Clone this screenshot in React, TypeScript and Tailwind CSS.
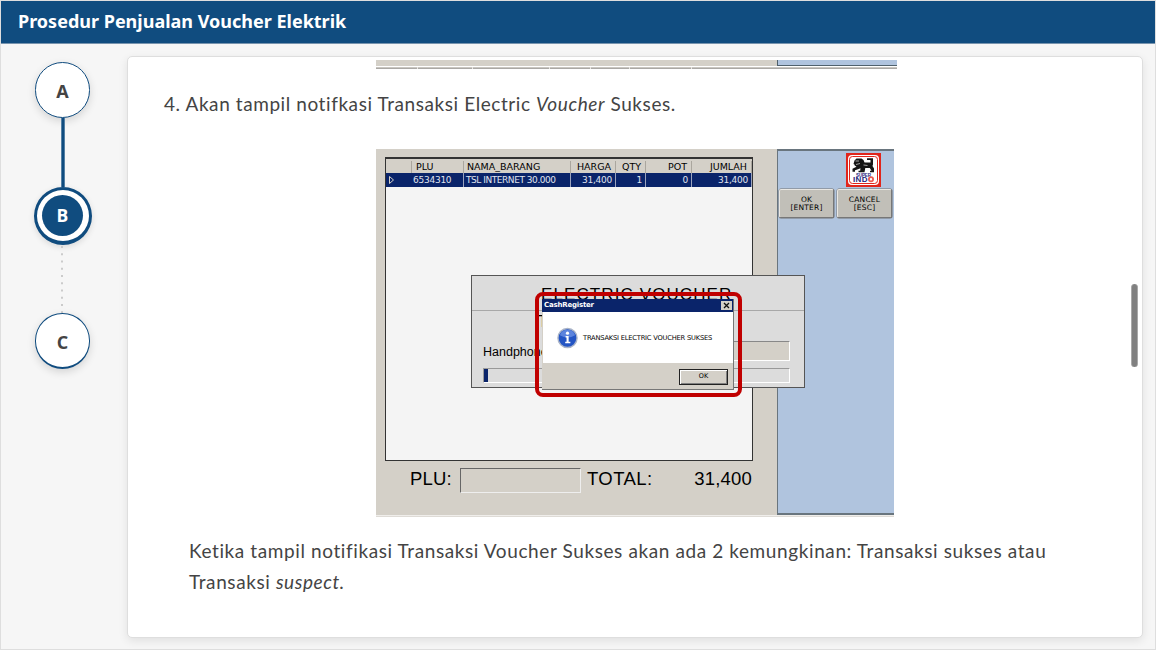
import type { ReactNode } from "react";

type StepProps = { label: string; bottomBorder?: boolean };

function Step({ label, bottomBorder }: StepProps) {
  return (
    <div
      className={`flex h-[56px] w-[55px] items-center justify-center rounded-full border bg-white border-[#104c7f] pt-[3px] text-[18px] font-bold text-[#444] shadow-[0_3px_8px_rgba(0,0,0,0.14)] ${
        bottomBorder ? "border-b-2" : ""
      }`}
    >
      {label}
    </div>
  );
}

function Steps() {
  return (
    <nav className="flex w-[126px] shrink-0 flex-col items-center pr-[3px] pt-[18px] font-['Open_Sans','Noto_Sans',sans-serif]">
      <Step label="A" />
      <div className="ml-px h-[69px] w-[4px] border-x border-[#5581a5] bg-[#104c7f]" />
      <div className="flex h-[58px] w-[58px] items-center justify-center rounded-full border-[3px] border-b-4 border-[#104c7f] bg-white shadow-[0_2px_6px_rgba(0,0,0,0.12)]">
        <div className="flex h-[41px] w-[41px] items-center justify-center rounded-full bg-[#104c7f] text-[17.5px] font-bold text-white">
          B
        </div>
      </div>
      <svg width="2" height="68" className="mr-px block">
        <path d="M1 1V68" stroke="#cbcbcb" strokeWidth="2" strokeDasharray="2 5.25" />
      </svg>
      <Step label="C" bottomBorder />
    </nav>
  );
}

function Cell({ className, children }: { className: string; children?: ReactNode }) {
  return <div className={`flex shrink-0 items-center whitespace-nowrap ${className}`}>{children}</div>;
}

function ItemTable() {
  return (
    <div className="h-[304px] w-[368px] border border-t-2 border-[#333] bg-[#f4f4f4] font-['DejaVu_Sans',sans-serif] text-[9.5px]">
      <div className="flex h-[14px] bg-[#d4d0c8] pt-[2px] text-black [&>div]:border-r [&>div]:border-[#aaa69e]">
        <Cell className="w-[26px]" />
        <Cell className="w-[52px] pl-[4px]">PLU</Cell>
        <Cell className="w-[107px] pl-[3px]">NAMA_BARANG</Cell>
        <Cell className="w-[45px] justify-end pr-[4px]">HARGA</Cell>
        <Cell className="w-[30px] justify-end pr-[4px]">QTY</Cell>
        <Cell className="w-[46px] justify-end pr-[4px]">POT</Cell>
        <Cell className="w-[60px] justify-end pr-[4px]">JUMLAH</Cell>
      </div>
      <div className="flex h-[14px] bg-[#0a246a] text-[9px] tracking-[-0.25px] text-[#e0e4ee] [&>div+div]:border-r [&>div+div]:border-[#9ba3bd]">
        <Cell className="w-[26px] pl-[3px]">
          <svg width="5" height="8" viewBox="0 0 5 8">
            <path d="M.5 .5v7L4.500 4z" fill="#0a246a" stroke="#d4d0c8" />
          </svg>
        </Cell>
        <Cell className="w-[52px] pl-[1px] pt-px">6534310</Cell>
        <Cell className="w-[107px] pl-[2px] pt-px tracking-[-0.45px]">TSL INTERNET 30.000</Cell>
        <Cell className="w-[45px] justify-end pr-[3px] pt-px">31,400</Cell>
        <Cell className="w-[30px] justify-end pr-[3px] pt-px">1</Cell>
        <Cell className="w-[46px] justify-end pr-[3px] pt-px">0</Cell>
        <Cell className="w-[60px] justify-end pr-[3px] pt-px">31,400</Cell>
      </div>
    </div>
  );
}

function LionLogo() {
  return (
    <svg width="35" height="34" viewBox="0 0 35 34">
      <rect width="35" height="34" fill="#e1251b" />
      <rect x="2" y="2" width="31" height="30" rx="4" fill="#fff" />
      <rect x="3.5" y="3.5" width="28" height="27" rx="3" fill="#fff" stroke="#e1251b" />
      <path
        d="M8.500 7.500l2-2h5l2 1.500 1 2.500h6V7h-3.500V5.200h6v6.300l-.5 1.500 1.500 2.500v3.700h-4v-1.500h1.500l-1.700-2.700h-4.500l-.8 4.200h-6v-1.500h1.700l.3-2.500-2.500 1-3 1v1.500H6.500v-3l4-2-2-1.500V11.500l-1-.5z"
        fill="#161616"
      />
      <path d="M9.500 8h3.500M10 11.500l4-1M17.500 12l4 .5" stroke="#fff" strokeWidth=".6" />
      <text x="17.5" y="23.500" textAnchor="middle" fontFamily="Liberation Sans" fontWeight="700" fontSize="4.500" textLength="15" fill="#25247b">
        SUPER
      </text>
      <text x="7" y="29.400" fontFamily="Liberation Sans" fontWeight="700" fontSize="8" textLength="14.500" fill="#25247b">
        IND
      </text>
      <circle cx="25" cy="26.300" r="2.100" fill="#fff" stroke="#ed5b52" strokeWidth="1.800" />
    </svg>
  );
}

function KeyButton({ top, bottom }: { top: string; bottom: string }) {
  return (
    <div className="flex h-[29px] w-[55px] flex-col items-center justify-center rounded-[2px] border border-[#777] border-t-[#e9e7e2] border-l-[#e9e7e2] bg-[#c1bfb8] pt-px font-['DejaVu_Sans',sans-serif] text-[7.5px] leading-[8px] tracking-[0.2px] text-black shadow-[0_0_0_0.5px_#727272]">
      <span>{top}</span>
      <span>{bottom}</span>
    </div>
  );
}

function MessageBox() {
  return (
    <div className="absolute left-[159px] top-[143px] h-[105px] w-[207px] rounded-[8px] border-4 border-[#c00000] p-[3px] pr-[4px]">
      <div className="flex h-full flex-col border-r border-b border-[#777] bg-[#d4d0c8] font-['DejaVu_Sans',sans-serif] text-black">
        <div className="flex h-[13px] shrink-0 items-center justify-between bg-[#0a246a] pl-[2px] pr-[1px] text-[7px] font-bold tracking-[-0.2px] text-white">
          <span>CashRegister</span>
          <svg width="11" height="9">
            <rect width="11" height="9" fill="#d4d0c8" />
            <path d="M3 2l5 5M8 2L3 7" stroke="#111" strokeWidth="1.300" />
          </svg>
        </div>
        <div className="ml-px flex h-[51px] shrink-0 items-center bg-white pl-[14px]">
          <svg width="21" height="22" viewBox="0 0 22 22">
            <circle cx="11" cy="11" r="10" fill="#2455c4" stroke="#aab4c8" strokeWidth="1.5" />
            <path d="M3 8a8.5 8.5 0 0 1 16 0q-8 5-16 0" fill="#5b83dd" />
            <path d="M9 9h3.200v6H14v1.500H8.600V15H10v-4.500H9z" fill="#fff" />
            <circle cx="11" cy="6" r="1.700" fill="#fff" />
          </svg>
          <span className="ml-[5px] pt-[2px] whitespace-nowrap text-[6.7px] tracking-[-0.2px]">TRANSAKSI ELECTRIC VOUCHER SUKSES</span>
        </div>
        <div className="flex flex-1 items-center justify-end pr-[5px] pt-px">
          <div className="flex h-[16px] w-[49px] items-center justify-center border border-[#222] bg-[#d4d0c8] pt-px text-[6.5px] shadow-[inset_1px_1px_0_#fff,inset_-1px_-1px_0_#808080]">
            OK
          </div>
        </div>
      </div>
    </div>
  );
}

function VoucherWindow() {
  return (
    <div className="absolute left-[95px] top-[126px] h-[113px] w-[334px] border border-[#555] bg-[#dcdcdc] font-['Liberation_Sans',sans-serif] text-black">
      <div className="h-[35px] border-b border-[#a8a8a8] pl-[69px] pt-[9px]">
        <div className="w-fit whitespace-nowrap text-[17px] leading-[20px] tracking-[1.1px]">ELECTRIC VOUCHER</div>
      </div>
      <div className="h-[30px] pl-[66px] pt-[2px] text-[16px] leading-[18px]">T</div>
      <div className="flex h-[20px] items-center justify-between pl-[11px] pr-[14px]">
        <span className="pt-[2px] text-[12.5px]">Handphone</span>
        <div className="h-[20px] w-[180px] border border-[#888] border-r-white border-b-white bg-[#d4d0c8]" />
      </div>
      <div className="ml-[11px] mt-[7px] mr-[14px] h-[15px] border border-[#999] border-r-white border-b-white">
        <div className="h-[13px] w-[4px] bg-[#0a246a]" />
      </div>
    </div>
  );
}

function RegisterScreen() {
  return (
    <div className="relative ml-[248px] flex h-[368px] w-[518px] flex-col font-['Liberation_Sans',sans-serif]">
      <div className="flex h-[366px]">
        <div className="w-[401px] bg-[#d4d0c8] pl-[9px] pt-[8px]">
          <ItemTable />
          <div className="flex h-[36px] items-center pl-[25px] text-[18.5px] text-black">
            <span className="w-[50px] tracking-[0.2px]">PLU:</span>
            <div className="mt-[2px] h-[25px] w-[121px] border border-[#666] border-r-[#eee] border-b-[#eee]" />
            <span className="ml-[6px] w-[66px] tracking-[0.4px]">TOTAL:</span>
            <span className="w-[99px] text-right tracking-[0.2px]">31,400</span>
          </div>
        </div>
        <div className="w-[117px] border-t-2 border-l border-b-2 border-[#69757e] bg-[#b0c4de]">
          <div className="ml-[68px] mt-[2px]">
            <LionLogo />
          </div>
          <div className="ml-[1px] mt-[2px] flex gap-[3px]">
            <KeyButton top="OK" bottom="[ENTER]" />
            <KeyButton top="CANCEL" bottom="[ESC]" />
          </div>
        </div>
      </div>
      <div className="h-[2px] border-t border-[#f0eeeb] bg-[#dedbd6]" />
      <VoucherWindow />
      <MessageBox />
    </div>
  );
}

function PreviousScreenEdge() {
  return (
    <div className="ml-[248px] flex h-[9px] w-[521px] flex-col">
      <div className="flex h-[6px]">
        <div className="w-[401px] bg-[#d4d0c8]" />
        <div className="w-[120px] border-l border-b border-[#50616c] bg-[#b0c4de]" />
      </div>
      <div className="mt-px flex h-[2px] gap-px bg-[#e8e6e2] [&>div]:border-t [&>div]:border-[#c9c6c0] [&>div]:bg-[#aaa8a5]">
        <div className="w-[41px]" />
        <div className="w-[54px]" />
        <div className="w-[76px]" />
        <div className="w-[40px]" />
        <div className="w-[38px]" />
        <div className="w-[61px]" />
        <div className="w-[205px]" />
      </div>
    </div>
  );
}

export default function App() {
  return (
    <div className="flex h-[650px] w-[1156px] flex-col overflow-hidden border border-[#dedede] bg-[#f6f6f6]">
      <header className="flex h-[43px] shrink-0 items-center border-b border-[#7894ae] bg-[#104c7f] pb-[2px] pl-[17px] font-['Noto_Sans','Open_Sans',sans-serif] text-[18px] font-bold text-white">
        <h1 className="whitespace-nowrap">Prosedur Penjualan Voucher Elektrik</h1>
      </header>
      <div className="flex flex-1">
        <Steps />
        <main className="relative mt-[12px] h-[582px] w-[1016px] shrink-0 rounded-[5px] border border-[#dedede] bg-white pt-[3px] font-['Lato',sans-serif] text-[19px] text-[#444] shadow-[0_3px_10px_rgba(0,0,0,0.09)]">
          <PreviousScreenEdge />
          <p className="mt-[19px] pl-[36px] leading-[31px] whitespace-nowrap tracking-[0.58px]">
            4. Akan tampil notifkasi Transaksi Electric <em>Voucher</em> Sukses.
          </p>
          <div className="mt-[30px]">
            <RegisterScreen />
          </div>
          <p className="mt-[18px] pl-[61px] leading-[31px] whitespace-nowrap tracking-[0.6px]">
            Ketika tampil notifikasi Transaksi Voucher Sukses akan ada 2 kemungkinan: Transaksi sukses atau
            <br />
            Transaksi <em>suspect.</em>
          </p>
          <div className="absolute top-[227px] right-[4px] h-[83px] w-[7px] rounded-full border-x border-[#a9a9a9] bg-[#808080]" />
        </main>
      </div>
    </div>
  );
}
